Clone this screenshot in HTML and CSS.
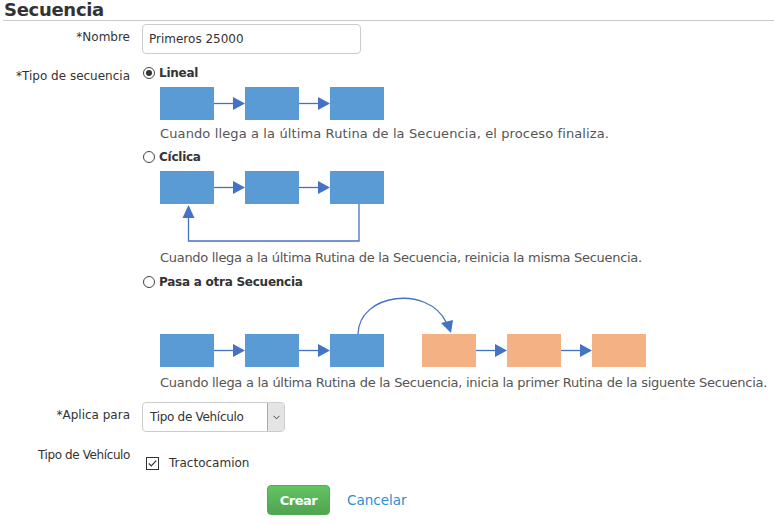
FILE: index.html
```html
<!DOCTYPE html>
<html lang="es">
<head>
<meta charset="utf-8">
<title>Secuencia</title>
<link rel="stylesheet" href="styles.css">
</head>
<body>
<div class="page">
  <div class="header"><h1 class="title">Secuencia</h1></div>

  <div class="row row-nombre">
    <div class="label">*Nombre</div>
    <div class="field"><div class="input">Primeros 25000</div></div>
  </div>

  <div class="row row-tipo">
    <div class="label">*Tipo de secuencia</div>
    <div class="field options">
      <div class="radio-row"><span class="radio checked"></span><span class="opt">Lineal</span></div>
      <svg class="diagram d-lineal" width="224" height="33" viewBox="0 0 224 33">
        <rect x="0" y="0" width="54" height="33" fill="#5b9bd5"/>
        <rect x="85" y="0" width="54" height="33" fill="#5b9bd5"/>
        <rect x="170" y="0" width="54" height="33" fill="#5b9bd5"/>
        <g stroke="#4472c4" stroke-width="1.3">
          <line x1="54" y1="16.5" x2="74" y2="16.5"/>
          <line x1="139" y1="16.5" x2="159" y2="16.5"/>
        </g>
        <g fill="#4472c4">
          <polygon points="73,10 85,16.5 73,23"/>
          <polygon points="158,10 170,16.5 158,23"/>
        </g>
      </svg>
      <p class="desc desc-1">Cuando llega a la última Rutina de la Secuencia, el proceso finaliza.</p>

      <div class="radio-row"><span class="radio"></span><span class="opt">Cíclica</span></div>
      <svg class="diagram d-ciclica" width="224" height="72" viewBox="0 0 224 72">
        <rect x="0" y="0" width="54" height="33" fill="#5b9bd5"/>
        <rect x="85" y="0" width="54" height="33" fill="#5b9bd5"/>
        <rect x="170" y="0" width="54" height="33" fill="#5b9bd5"/>
        <g stroke="#4472c4" stroke-width="1.3" fill="none">
          <line x1="54" y1="16.5" x2="74" y2="16.5"/>
          <line x1="139" y1="16.5" x2="159" y2="16.5"/>
          <path d="M199,33 V70 H28.5 V46"/>
        </g>
        <g fill="#4472c4">
          <polygon points="73,10 85,16.5 73,23"/>
          <polygon points="158,10 170,16.5 158,23"/>
          <polygon points="22.5,47 34.5,47 28.5,34"/>
        </g>
      </svg>
      <p class="desc desc-2">Cuando llega a la última Rutina de la Secuencia, reinicia la misma Secuencia.</p>

      <div class="radio-row"><span class="radio"></span><span class="opt">Pasa a otra Secuencia</span></div>
      <svg class="diagram d-pasa" width="486" height="72" viewBox="0 0 486 72">
        <rect x="0" y="39" width="54" height="33" fill="#5b9bd5"/>
        <rect x="85" y="39" width="54" height="33" fill="#5b9bd5"/>
        <rect x="170" y="39" width="54" height="33" fill="#5b9bd5"/>
        <rect x="262" y="39" width="54" height="33" fill="#f4b183"/>
        <rect x="347" y="39" width="54" height="33" fill="#f4b183"/>
        <rect x="432" y="39" width="54" height="33" fill="#f4b183"/>
        <g stroke="#4472c4" stroke-width="1.3" fill="none">
          <line x1="54" y1="55.5" x2="74" y2="55.5"/>
          <line x1="139" y1="55.5" x2="159" y2="55.5"/>
          <line x1="316" y1="55.5" x2="336" y2="55.5"/>
          <line x1="401" y1="55.5" x2="421" y2="55.5"/>
          <path d="M198,39 C199,-2 268,-10 286,27"/>
        </g>
        <g fill="#4472c4">
          <polygon points="73,49 85,55.5 73,62"/>
          <polygon points="158,49 170,55.5 158,62"/>
          <polygon points="335,49 347,55.5 335,62"/>
          <polygon points="420,49 432,55.5 420,62"/>
          <polygon points="281,28 293,25 291,38"/>
        </g>
      </svg>
      <p class="desc desc-3">Cuando llega a la última Rutina de la Secuencia, inicia la primer Rutina de la siguente Secuencia.</p>
    </div>
  </div>

  <div class="row row-aplica">
    <div class="label">*Aplica para</div>
    <div class="field">
      <div class="select">
        <span class="select-text">Tipo de Vehículo</span>
        <span class="select-caret">
          <svg width="7" height="5" viewBox="0 0 7 5"><path d="M0.5,0.8 L3.5,3.8 L6.5,0.8" fill="none" stroke="#444" stroke-width="1"/></svg>
        </span>
      </div>
    </div>
  </div>

  <div class="row row-vehiculo">
    <div class="label">Tipo de Vehículo</div>
    <div class="field">
      <div class="check-row">
        <svg class="checkbox" width="13" height="13" viewBox="0 0 13 13">
          <rect x="0.5" y="0.5" width="12" height="12" fill="#fff" stroke="#333" stroke-width="1"/>
          <path d="M2.8,6.5 L5.3,9 L10.2,3.6" fill="none" stroke="#333" stroke-width="1.2"/>
        </svg>
        <span class="check-text">Tractocamion</span>
      </div>
    </div>
  </div>

  <div class="actions">
    <button class="btn-crear" type="button">Crear</button>
    <a class="link-cancel" href="#">Cancelar</a>
  </div>
</div>
</body>
</html>
```

FILE: styles.css
```css
html, body {
  margin: 0;
  padding: 0;
  background: #fff;
}
body {
  font-family: "DejaVu Sans", Verdana, sans-serif;
  color: #333;
  font-size: 12px;
}
.page {
  width: 774px;
}
.header {
  margin-left: 3px;
  height: 20px;
  border-bottom: 1px solid #c8c8c8;
}
.title {
  margin: 0;
  padding-left: 1px;
  font-size: 18px;
  line-height: 19px;
  font-weight: bold;
  letter-spacing: -0.3px;
  color: #333;
}
.row {
  display: grid;
  grid-template-columns: 130px 1fr;
  column-gap: 12px;
}
.label {
  text-align: right;
  line-height: 18px;
  font-size: 12px;
  color: #333;
}
.row-nombre { margin-top: 3px; }
.row-nombre .label { padding-top: 4px; }
.row-tipo { margin-top: 10px; }
.row-tipo .label { padding-top: 3px; }
.row-aplica { margin-top: 10px; }
.row-aplica .label { padding-top: 4px; }
.row-vehiculo { margin-top: 14px; }
.row-vehiculo .label { padding-top: 0; letter-spacing: -0.4px; }

.input {
  box-sizing: border-box;
  width: 219px;
  height: 30px;
  border: 1px solid #ccc;
  border-radius: 4px;
  padding-left: 6px;
  line-height: 28px;
  font-size: 12px;
  color: #333;
}

.options {
  display: flex;
  flex-direction: column;
  align-items: flex-start;
}
.radio-row {
  display: flex;
  align-items: center;
  height: 18px;
}
.radio {
  box-sizing: border-box;
  width: 12px;
  height: 12px;
  margin-left: 1px;
  margin-right: 4px;
  border: 1px solid #444;
  border-radius: 50%;
  background: #fff;
  position: relative;
}
.radio.checked::after {
  content: "";
  position: absolute;
  left: 2px;
  top: 2px;
  width: 6px;
  height: 6px;
  border-radius: 50%;
  background: #333;
}
.opt {
  font-weight: bold;
  font-size: 12px;
  letter-spacing: -0.25px;
  color: #333;
}
.diagram {
  display: block;
  margin-left: 18px;
}
.desc {
  margin: 0 0 0 18px;
  font-size: 13px;
  line-height: 18px;
  color: #555;
  white-space: nowrap;
}
.desc-1 { letter-spacing: 0.12px; }
.desc-2 { letter-spacing: -0.3px; }
.desc-3 { letter-spacing: -0.27px; }
.d-lineal { margin-top: 5px; }
.desc-1 { margin-top: 5px; }
.options .radio-row:nth-of-type(2) { margin-top: 5px; }
.d-ciclica { margin-top: 5px; }
.desc-2 { margin-top: 6px; }
.options .radio-row:nth-of-type(3) { margin-top: 6px; }
.d-pasa { margin-top: 4px; }
.desc-3 { margin-top: 7px; }

.select {
  box-sizing: border-box;
  width: 143px;
  height: 30px;
  border: 1px solid #ccc;
  border-radius: 4px;
  display: flex;
  align-items: stretch;
  overflow: hidden;
}
.select-text {
  flex: 1;
  padding-left: 7px;
  line-height: 28px;
  font-size: 12px;
  letter-spacing: -0.3px;
  color: #333;
}
.select-caret {
  width: 16px;
  background: #e4e4e4;
  border-left: 1px solid #aaa;
  display: flex;
  align-items: center;
  justify-content: center;
}

.check-row {
  display: flex;
  align-items: center;
  height: 18px;
  margin-top: 8px;
  padding-left: 4px;
}
.checkbox {
  display: block;
  margin-right: 10px;
}
.check-text {
  font-size: 12px;
  color: #333;
}

.actions {
  display: flex;
  align-items: center;
  margin-top: 13px;
  padding-left: 267px;
}
.btn-crear {
  width: 63px;
  height: 30px;
  border: 1px solid #4cae4c;
  border-radius: 4px;
  background: linear-gradient(#62c462, #51a351);
  color: #fff;
  font-family: "DejaVu Sans", Verdana, sans-serif;
  font-weight: bold;
  font-size: 13px;
  letter-spacing: -0.5px;
  padding: 0;
  cursor: pointer;
}
.link-cancel {
  margin-left: 17px;
  font-size: 13.5px;
  color: #2a8fd4;
  text-decoration: none;
}
```
